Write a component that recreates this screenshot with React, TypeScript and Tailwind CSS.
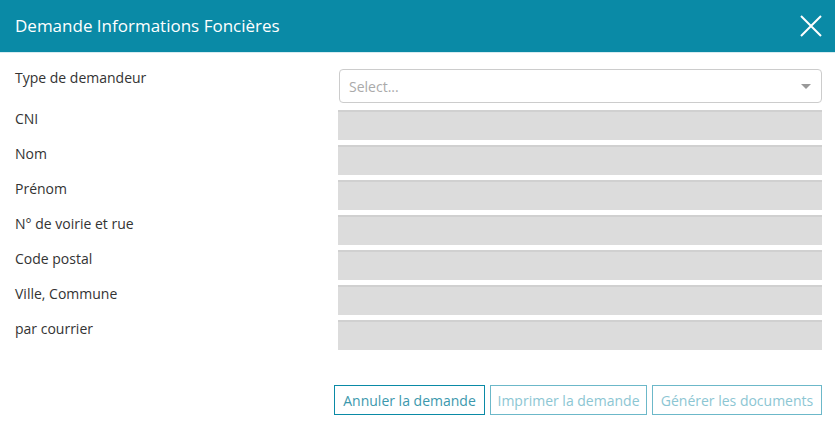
const fields = ['CNI', 'Nom', 'Prénom', 'N° de voirie et rue', 'Code postal', 'Ville, Commune', 'par courrier'];

const App = () => {
  return (
    <div className="w-[835px] h-[427px] bg-white font-['Open_Sans',sans-serif] text-[#333]">
      {/* Header */}
      <div className="h-[53px] bg-[#0a8aa6] border-b border-[#d7ecf1] flex items-center justify-between pl-[15px] pr-[13px]">
        <h2 className="text-[17px] text-white">Demande Informations Foncières</h2>
        <svg width="22" height="22" viewBox="0 0 22 22" className="text-white">
          <path d="M1 1 L21 21 M21 1 L1 21" stroke="currentColor" strokeWidth="2" />
        </svg>
      </div>

      {/* Body */}
      <div className="pt-[16px] pl-[15px] pr-[13px]">
        <div className="flex">
          <div className="w-[324px] leading-[20px] text-[14px] -mt-[1px]">Type de demandeur</div>
          <div className="flex-1 h-[34px] border border-[#ccc] rounded-[4px] flex items-center justify-between pl-[9px] pr-[10px]">
            <span className="text-[14px] text-[#aaa]">Select...</span>
            <span className="w-0 h-0 border-l-[5px] border-r-[5px] border-t-[5px] border-l-transparent border-r-transparent border-t-[#999]" />
          </div>
        </div>

        <div className="mt-[7px] flex flex-col gap-[5px]">
          {fields.map((f) => (
            <div key={f} className="flex">
              <div className="w-[323px] leading-[20px] text-[14px] -mt-[1px]">{f}</div>
              <div className="flex-1 h-[30px] bg-[#dcdcdc] border-t-2 border-[#d0d0d0]" />
            </div>
          ))}
        </div>

        <div className="mt-[35px] flex justify-end gap-[5px]">
          <button className="h-[30px] w-[151px] border border-[#0a8aa6] text-[#3c98ad] text-[14px]">Annuler la demande</button>
          <button className="h-[30px] w-[157px] border border-[#6cb8c9] text-[#8cc6d3] text-[14px]">Imprimer la demande</button>
          <button className="h-[30px] w-[170px] border border-[#6cb8c9] text-[#8cc6d3] text-[14px]">Générer les documents</button>
        </div>
      </div>
    </div>
  );
};

export default App;
